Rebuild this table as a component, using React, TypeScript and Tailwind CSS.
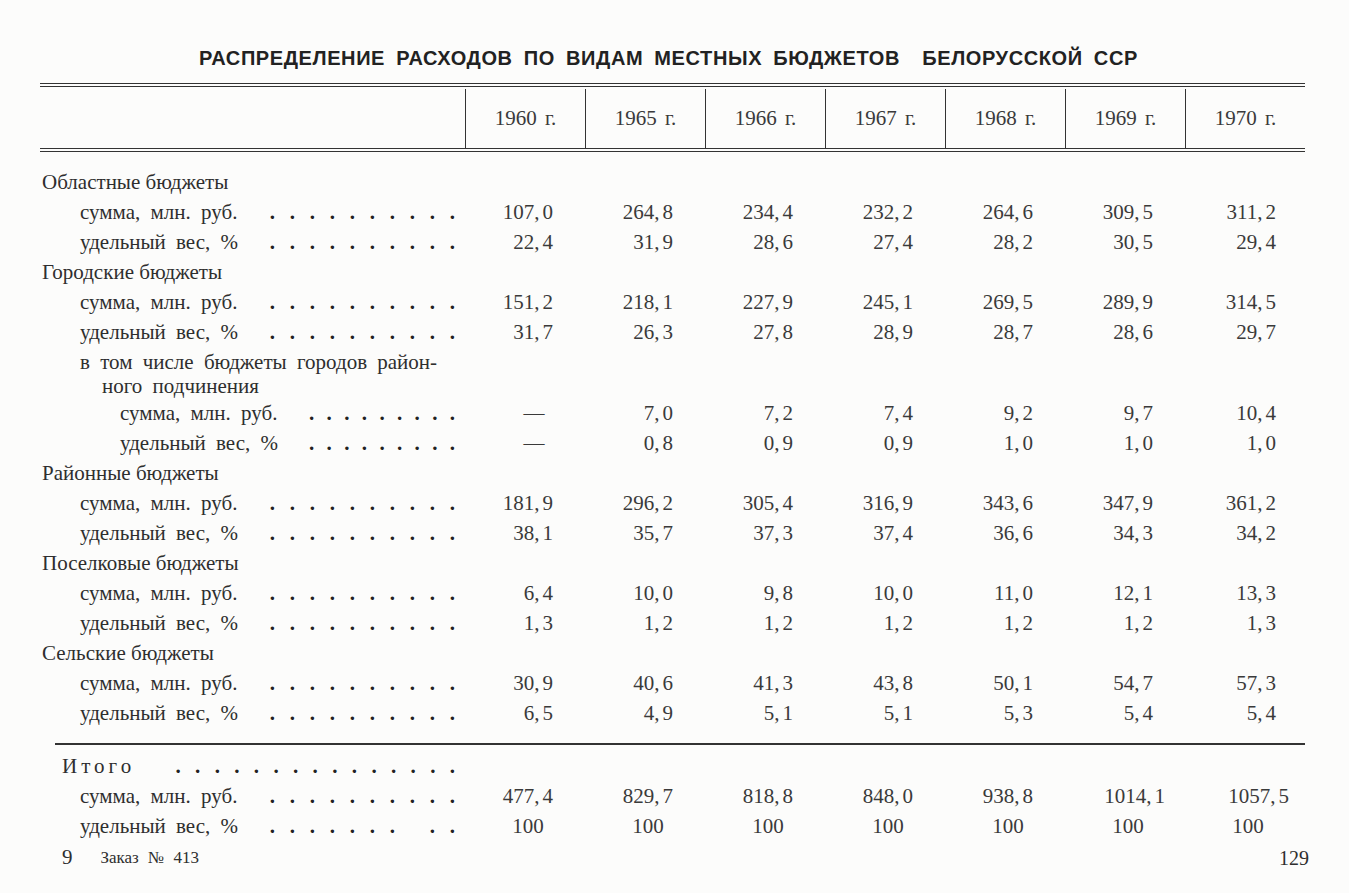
import React from 'react';

type Row =
  | { kind: 'section'; label: string }
  | { kind: 'note'; lines: [string, string] }
  | { kind: 'item'; label: string; level: 1 | 2; dots: number; skip?: number; values: string[] }
  | { kind: 'total'; label: string };

const YEARS = ['1960 г.', '1965 г.', '1966 г.', '1967 г.', '1968 г.', '1969 г.', '1970 г.'];

const SUM = 'сумма, млн. руб.';
const SHARE = 'удельный вес, %';

const ROWS: Row[] = [
  { kind: 'section', label: 'Областные бюджеты' },
  { kind: 'item', label: SUM, level: 1, dots: 10, values: ['107,0', '264,8', '234,4', '232,2', '264,6', '309,5', '311,2'] },
  { kind: 'item', label: SHARE, level: 1, dots: 10, values: ['22,4', '31,9', '28,6', '27,4', '28,2', '30,5', '29,4'] },
  { kind: 'section', label: 'Городские бюджеты' },
  { kind: 'item', label: SUM, level: 1, dots: 10, values: ['151,2', '218,1', '227,9', '245,1', '269,5', '289,9', '314,5'] },
  { kind: 'item', label: SHARE, level: 1, dots: 10, values: ['31,7', '26,3', '27,8', '28,9', '28,7', '28,6', '29,7'] },
  { kind: 'note', lines: ['в том числе бюджеты городов район-', 'ного подчинения'] },
  { kind: 'item', label: SUM, level: 2, dots: 9, values: ['—', '7,0', '7,2', '7,4', '9,2', '9,7', '10,4'] },
  { kind: 'item', label: SHARE, level: 2, dots: 9, values: ['—', '0,8', '0,9', '0,9', '1,0', '1,0', '1,0'] },
  { kind: 'section', label: 'Районные бюджеты' },
  { kind: 'item', label: SUM, level: 1, dots: 10, values: ['181,9', '296,2', '305,4', '316,9', '343,6', '347,9', '361,2'] },
  { kind: 'item', label: SHARE, level: 1, dots: 10, values: ['38,1', '35,7', '37,3', '37,4', '36,6', '34,3', '34,2'] },
  { kind: 'section', label: 'Поселковые бюджеты' },
  { kind: 'item', label: SUM, level: 1, dots: 10, values: ['6,4', '10,0', '9,8', '10,0', '11,0', '12,1', '13,3'] },
  { kind: 'item', label: SHARE, level: 1, dots: 10, values: ['1,3', '1,2', '1,2', '1,2', '1,2', '1,2', '1,3'] },
  { kind: 'section', label: 'Сельские бюджеты' },
  { kind: 'item', label: SUM, level: 1, dots: 10, values: ['30,9', '40,6', '41,3', '43,8', '50,1', '54,7', '57,3'] },
  { kind: 'item', label: SHARE, level: 1, dots: 10, values: ['6,5', '4,9', '5,1', '5,1', '5,3', '5,4', '5,4'] },
];

const TOTAL_ROWS: Row[] = [
  { kind: 'total', label: 'Итого' },
  { kind: 'item', label: SUM, level: 1, dots: 10, values: ['477,4', '829,7', '818,8', '848,0', '938,8', '1014,1', '1057,5'] },
  { kind: 'item', label: SHARE, level: 1, dots: 10, skip: 7, values: ['100', '100', '100', '100', '100', '100', '100'] },
];

const Dots: React.FC<{ n: number; step?: string; skip?: number }> = ({ n, step = 'w-[20px]', skip }) => (
  <div className="flex justify-end font-bold text-[#222]">
    {Array.from({ length: n }).map((_, i) => (
      <span key={i} className={`${step} text-right`}>{i === skip ? '' : '.'}</span>
    ))}
  </div>
);

// digits before and after the comma, with the loose comma spacing of the print
const Num: React.FC<{ v: string }> = ({ v }) => {
  const [a, b] = v.split(',');
  if (b === undefined) return <>{v}</>;
  return (
    <>
      {a}
      <span className="mr-[3px]">,</span>
      {b}
    </>
  );
};

const Cell: React.FC<{ v: string; col: number }> = ({ v, col }) => {
  if (v === '100') return <div className="w-[120px] text-center pl-[6px]">{v}</div>;
  if (v === '—') return <div className="w-[120px] text-center pl-[18px]">{v}</div>;
  const wide = v.length > 5;
  const pad = wide ? (col === 6 ? 'pr-[16px]' : 'pr-[20px]') : col === 6 ? 'pr-[29px]' : 'pr-[32px]';
  return (
    <div className={`w-[120px] text-right ${pad}`}>
      <Num v={v} />
    </div>
  );
};

const RowView: React.FC<{ row: Row }> = ({ row }) => {
  if (row.kind === 'section') {
    return <div className="h-[30px] flex items-center pl-[2px]">{row.label}</div>;
  }
  if (row.kind === 'total') {
    return (
      <div className="h-[30px] flex items-center">
        <div className="w-[425px] flex items-center pl-[22px] pr-[10px]">
          <span className="tracking-[4px]">{row.label}</span>
          <div className="flex-1">
            <Dots n={15} step="w-[19.6px]" />
          </div>
        </div>
      </div>
    );
  }
  if (row.kind === 'note') {
    return (
      <div className="pt-[2px] pb-[1px] leading-[24px] [word-spacing:5px]">
        <div className="pl-[40px]">{row.lines[0]}</div>
        <div className="pl-[62px]">{row.lines[1]}</div>
      </div>
    );
  }
  return (
    <div className="h-[30px] flex items-center">
      <div className={`w-[425px] flex items-center pr-[10px] ${row.level === 1 ? 'pl-[40px]' : 'pl-[80px]'}`}>
        <span className="[word-spacing:5px] whitespace-nowrap">{row.label}</span>
        <div className="flex-1">
          <Dots n={row.dots} step={row.level === 2 ? 'w-[17.6px]' : 'w-[20px]'} skip={row.skip} />
        </div>
      </div>
      <div className="flex text-[#3a3a3a]">
        {row.values.map((v, i) => (
          <Cell key={i} v={v} col={i} />
        ))}
      </div>
    </div>
  );
};

export default function App() {
  return (
    <div
      className="min-h-screen w-[1349px] bg-[#fcfcfb] text-[#2e2e2e] text-[21px]"
      style={{ fontFamily: "'Liberation Serif', 'DejaVu Serif', serif" }}
    >
      <div className="pt-[45px] h-[83px] flex justify-center pr-[12px]">
        <h1
          className="text-[20px] font-bold tracking-[0.6px] [word-spacing:5px] leading-[26px] text-[#222] whitespace-pre"
          style={{ fontFamily: "'Liberation Sans', Arial, sans-serif" }}
        >
          РАСПРЕДЕЛЕНИЕ РАСХОДОВ ПО ВИДАМ МЕСТНЫХ БЮДЖЕТОВ  БЕЛОРУССКОЙ ССР
        </h1>
      </div>

      <div className="ml-[40px] w-[1265px]">
        <div className="h-[4px] border-t-[1.5px] border-b-[1.5px] border-[#333]" />
        <div className="flex h-[61px] pt-[2px]">
          <div className="w-[425px]" />
          {YEARS.map((y) => (
            <div
              key={y}
              className="w-[120px] flex items-center justify-center border-l-[1.5px] border-[#333] [word-spacing:3px] text-[#3a3a3a]"
            >
              {y}
            </div>
          ))}
        </div>
        <div className="h-[4px] border-t-[1.5px] border-b-[1.5px] border-[#333]" />

        <div className="pt-[16px]">
          {ROWS.map((r, i) => (
            <RowView key={i} row={r} />
          ))}
        </div>

        <div className="mt-[14px] ml-[15px] h-[2px] bg-[#333]" />

        <div className="pt-[7px]">
          {TOTAL_ROWS.map((r, i) => (
            <RowView key={i} row={r} />
          ))}
        </div>

        <div className="h-[32px] flex items-center">
          <span className="pl-[22px] text-[21px]">9</span>
          <span className="pl-[28px] text-[17px] [word-spacing:5px]">Заказ № 413</span>
          <span className="ml-auto mr-[-4px] text-[20px]">129</span>
        </div>
      </div>
    </div>
  );
}
